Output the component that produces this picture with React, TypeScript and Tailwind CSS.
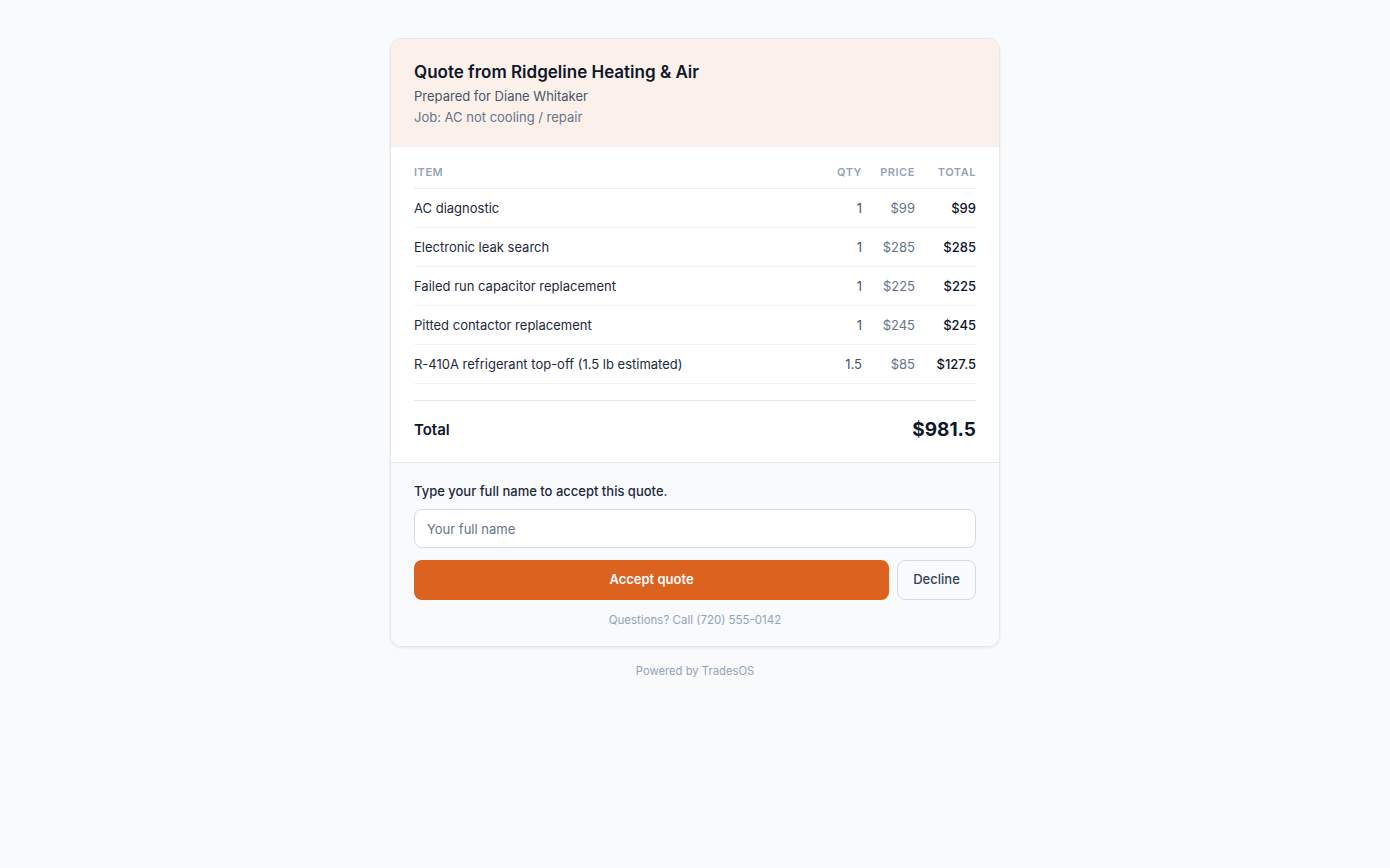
import { useState } from 'react';

type LineItem = {
  name: string;
  qty: number;
  price: number;
};

const items: LineItem[] = [
  { name: 'AC diagnostic', qty: 1, price: 99 },
  { name: 'Electronic leak search', qty: 1, price: 285 },
  { name: 'Failed run capacitor replacement', qty: 1, price: 225 },
  { name: 'Pitted contactor replacement', qty: 1, price: 245 },
  { name: 'R-410A refrigerant top-off (1.5 lb estimated)', qty: 1.5, price: 85 },
];

const money = (n: number) => `$${Math.round(n * 100) / 100}`;

export default function App() {
  const [name, setName] = useState('');
  const total = items.reduce((sum, i) => sum + i.qty * i.price, 0);

  return (
    <div className="min-h-screen bg-[#f8fafc] pt-[38px] font-['Inter','Liberation_Sans',sans-serif] text-[#0f172a]">
      <div className="mx-auto w-[610px] overflow-hidden rounded-xl border border-[#e2e8f0] bg-white shadow-[0_1px_3px_rgba(15,23,42,0.08)]">
        {/* header */}
        <div className="border-b border-[#eef1f5] bg-[#fcf1ea] px-[23px] pt-[19px] pb-[19px]">
          <h1 className="text-[17px] leading-7 font-semibold text-[#0f172a]">Quote from Ridgeline Heating &amp; Air</h1>
          <p className="text-[13px] leading-5 text-[#475569]">Prepared for Diane Whitaker</p>
          <p className="mt-px text-[13px] leading-5 text-[#64748b]">Job: AC not cooling / repair</p>
        </div>

        {/* line items */}
        <div className="px-[23px] pt-[17px]">
          <div className="grid grid-cols-[1fr_48px_53px_61px] border-b border-[#e9edf2] pb-2 text-[11px] leading-4 font-semibold tracking-wider text-[#94a3b8] uppercase">
            <div>Item</div>
            <div className="text-right">Qty</div>
            <div className="text-right">Price</div>
            <div className="text-right">Total</div>
          </div>
          {items.map((item) => (
            <div
              key={item.name}
              className="grid grid-cols-[1fr_48px_53px_61px] items-center border-b border-[#f1f4f7] py-[9px] text-[13px] leading-5"
            >
              <div className="text-[#1e293b]">{item.name}</div>
              <div className="text-right text-[#475569]">{item.qty}</div>
              <div className="text-right text-[#64748b]">{money(item.price)}</div>
              <div className="text-right font-medium text-[#0f172a]">{money(item.qty * item.price)}</div>
            </div>
          ))}
          <div className="mt-4 flex items-center justify-between border-t border-[#e2e8f0] pt-[15px] pb-[18px]">
            <span className="text-[15px] font-semibold">Total</span>
            <span className="text-[19px] leading-7 font-bold">{money(total)}</span>
          </div>
        </div>

        {/* acceptance */}
        <div className="border-t border-[#e2e8f0] bg-[#f8fafc] px-[23px] pt-[18px] pb-[18px]">
          <label className="block text-[13px] leading-5 font-medium text-[#1e293b]">
            Type your full name to accept this quote.
          </label>
          <input
            value={name}
            onChange={(e) => setName(e.target.value)}
            placeholder="Your full name"
            className="mt-2 h-[39px] w-full rounded-lg border border-[#d5dbe3] bg-white px-3 text-[13px] text-[#0f172a] placeholder:text-[#64748b] focus:outline-none"
          />
          <div className="mt-3 flex gap-2">
            <button className="h-10 flex-1 rounded-lg bg-[#dc6220] text-[13px] font-semibold text-white">
              Accept quote
            </button>
            <button className="h-10 w-[79px] rounded-lg border border-[#d5dbe3] bg-[#f8fafc] text-[13px] font-medium text-[#334155]">
              Decline
            </button>
          </div>
          <p className="mt-3 text-center text-[11.5px] leading-4 text-[#94a3b8]">Questions? Call (720) 555-0142</p>
        </div>
      </div>
      <p className="mt-4 text-center text-[11.25px] leading-4 text-[#94a3b8]">Powered by TradesOS</p>
    </div>
  );
}
